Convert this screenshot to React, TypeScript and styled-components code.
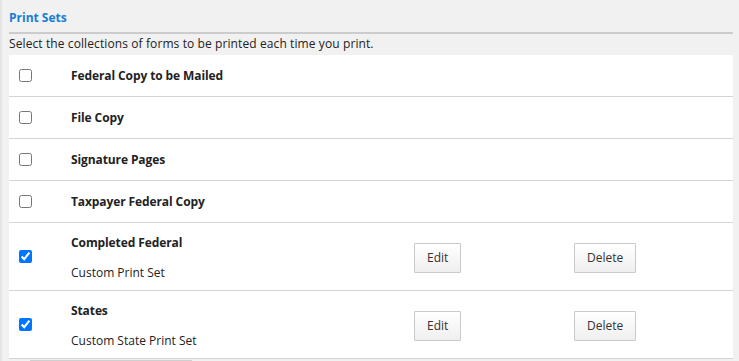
import { FC } from "react";
import styled, { createGlobalStyle } from "styled-components";

const GlobalStyle = createGlobalStyle`
  html, body {
    margin: 0;
    padding: 0;
    background: #f1f1f1;
    font-family: "Open Sans", "Noto Sans", Arial, sans-serif;
    color: #222;
  }
`;

const Page = styled.div`
  height: 361px;
  border-left: 2px solid #e4e4e4;
  padding: 0 6px 0 7px;
  box-sizing: border-box;
  overflow: hidden;
`;

const Heading = styled.h2`
  margin: 0;
  padding: 9px 0 6px;
  font-size: 12px;
  line-height: 17px;
  font-weight: 700;
  color: #1a7dd3;
  border-bottom: 2px solid #cccccc;
`;

const Intro = styled.p`
  margin: 0;
  padding: 2px 0 3px;
  font-size: 12px;
  line-height: 16px;
  letter-spacing: 0.1px;
`;

const Panel = styled.div`
  background: #fff;
`;

const Row = styled.div<{ $tall?: boolean }>`
  display: grid;
  grid-template-columns: 62px 343px 160px 1fr;
  align-items: center;
  min-height: ${({ $tall }) => ($tall ? "68px" : "42px")};
  border-bottom: 1px solid #d4d4d4;
  box-sizing: border-box;
`;

const CheckCell = styled.div`
  display: flex;
  align-items: center;
  padding-left: 10px;

  input {
    margin: 0;
    width: 13px;
    height: 13px;
  }
`;

const Labels = styled.div<{ $tall?: boolean }>`
  display: flex;
  flex-direction: column;
  gap: 12px;
  padding: ${({ $tall }) => ($tall ? "11px 0 8px" : "0")};
`;

const Title = styled.span`
  font-size: 12px;
  line-height: 18px;
  font-weight: 700;
  letter-spacing: -0.1px;
`;

const Sub = styled.span`
  font-size: 12px;
  line-height: 18px;
`;

const Button = styled.button`
  justify-self: start;
  height: 30px;
  padding: 0 12px;
  margin-top: 2px;
  font-family: inherit;
  font-size: 12px;
  color: #333;
  background: linear-gradient(#ffffff, #efefef);
  border: 1px solid #c9c9c9;
  border-radius: 1px;
  cursor: pointer;
`;

const Footer = styled.div`
  padding: 1px 0 0 21px;
`;

const FooterBox = styled.div`
  width: 160px;
  height: 30px;
  border: 1px solid #cfcfcf;
  background: #f6f6f6;
`;

type PrintSet = { name: string; note?: string; checked?: boolean };

const sets: PrintSet[] = [
  { name: "Federal Copy to be Mailed" },
  { name: "File Copy" },
  { name: "Signature Pages" },
  { name: "Taxpayer Federal Copy" },
  { name: "Completed Federal", note: "Custom Print Set", checked: true },
  { name: "States", note: "Custom State Print Set", checked: true },
];

const App: FC = () => (
  <>
    <GlobalStyle />
    <Page>
      <Heading>Print Sets</Heading>
      <Intro>Select the collections of forms to be printed each time you print.</Intro>
      <Panel>
        {sets.map((s) => (
          <Row key={s.name} $tall={!!s.note}>
            <CheckCell>
              <input type="checkbox" defaultChecked={s.checked} aria-label={s.name} />
            </CheckCell>
            <Labels $tall={!!s.note}>
              <Title>{s.name}</Title>
              {s.note && <Sub>{s.note}</Sub>}
            </Labels>
            {s.note && <Button>Edit</Button>}
            {s.note && <Button>Delete</Button>}
          </Row>
        ))}
      </Panel>
      <Footer>
        <FooterBox />
      </Footer>
    </Page>
  </>
);

export default App;
